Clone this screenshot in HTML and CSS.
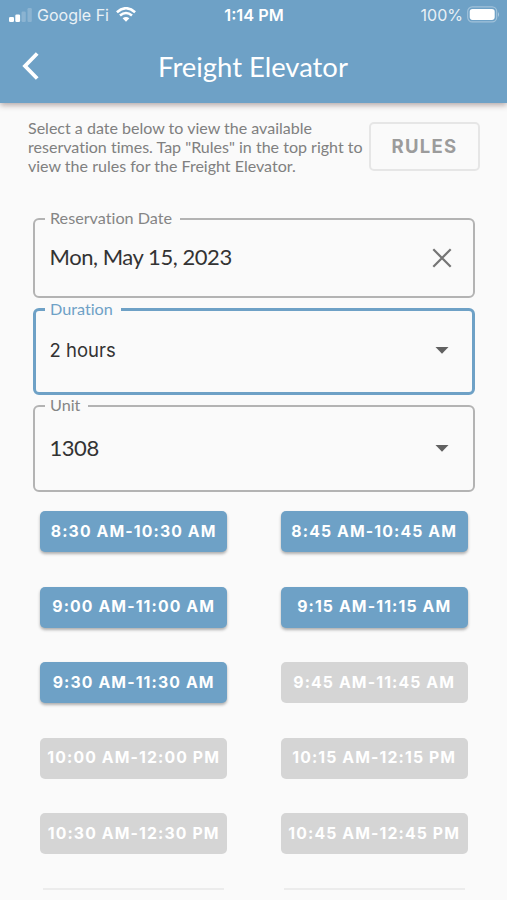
FILE: index.html
```html
<!DOCTYPE html>
<html lang="en">
<head>
<meta charset="utf-8">
<title>Freight Elevator</title>
<link rel="stylesheet" href="styles.css">
</head>
<body>
<header class="top">
  <div class="status">
    <div class="carrier">
      <svg class="signal" width="24" height="16" viewBox="0 0 24 16"><g fill="#fff"><rect x="0" y="10" width="5" height="5" rx="1.3"/><rect x="6.3" y="7.5" width="4.8" height="7.5" rx="1.3"/><rect x="12.5" y="4.5" width="4.3" height="10.5" rx="1.2" opacity=".2"/><rect x="18.5" y="1" width="4.3" height="14" rx="1.2" opacity=".2"/></g></svg>
      <span class="carrier-name">Google Fi</span>
      <svg class="wifi" width="20" height="15" viewBox="0 0 20 15"><g fill="none" stroke="#fff" stroke-width="2.6"><path d="M.9 5.2Q10-2.7 19.1 5.2"/><path d="M4 8.6Q10 3.4 16 8.6"/></g><path d="M6.6 11.3Q10 8.5 13.4 11.3L10 14.8Z" fill="#fff"/></svg>
    </div>
    <span class="clock">1:14 PM</span>
    <div class="power">
      <span>100%</span>
      <svg width="33" height="17" viewBox="0 0 33 17"><rect x=".7" y=".9" width="29" height="15" rx="4.6" fill="none" stroke="#fff" stroke-opacity=".35" stroke-width="1.2"/><rect x="2.7" y="2.9" width="25" height="11" rx="2.8" fill="#fff"/><path d="M31 6q2 2.5 0 5z" fill="#fff" opacity=".45"/></svg>
    </div>
  </div>
  <div class="bar">
    <svg class="back" width="18" height="28" viewBox="0 0 18 28"><path d="M16.2 1.5 4 14 16.2 26.5" fill="none" stroke="#fff" stroke-width="3.8"/></svg>
    <h1>Freight Elevator</h1>
  </div>
</header>
<main>
  <section class="intro">
    <p>Select a date below to view the available<br>reservation times. Tap "Rules" in the top right to<br>view the rules for the Freight Elevator.</p>
    <button class="rules">RULES</button>
  </section>
  <section class="fields">
    <div class="field date">
      <span class="label">Reservation Date</span>
      <span class="value">Mon, May 15, 2023</span>
      <svg width="20" height="20" viewBox="0 0 20 20"><path d="M1.3 1.3 18.7 18.7M18.7 1.3 1.3 18.7" stroke="#757575" stroke-width="2.2"/></svg>
    </div>
    <div class="field duration">
      <span class="label">Duration</span>
      <span class="value">2 hours</span>
      <svg width="14" height="7" viewBox="0 0 14 7"><path d="M.5 0h13L7 6.7z" fill="#616161"/></svg>
    </div>
    <div class="field unit">
      <span class="label">Unit</span>
      <span class="value">1308</span>
      <svg width="14" height="7" viewBox="0 0 14 7"><path d="M.5 0h13L7 6.7z" fill="#616161"/></svg>
    </div>
  </section>
  <section class="slots">
    <button class="slot">8:30 AM-10:30 AM</button>
    <button class="slot">8:45 AM-10:45 AM</button>
    <button class="slot">9:00 AM-11:00 AM</button>
    <button class="slot">9:15 AM-11:15 AM</button>
    <button class="slot">9:30 AM-11:30 AM</button>
    <button class="slot" disabled>9:45 AM-11:45 AM</button>
    <button class="slot" disabled>10:00 AM-12:00 PM</button>
    <button class="slot" disabled>10:15 AM-12:15 PM</button>
    <button class="slot" disabled>10:30 AM-12:30 PM</button>
    <button class="slot" disabled>10:45 AM-12:45 PM</button>
    <div class="next"></div>
    <div class="next"></div>
  </section>
</main>
</body>
</html>
```
FILE: styles.css
```css
* { box-sizing: border-box; }
body {
  margin: 0;
  height: 900px;
  overflow: hidden;
  background: #fafafa;
  font-family: Lato, sans-serif;
  font-variant-ligatures: none;
  color: #808080;
}
svg { display: block; flex: none; }
button { padding: 0; border: 0; font-family: Inter, sans-serif; }
.top {
  height: 103px;
  background: #6ea1c6;
  color: #fff;
  box-shadow: 0 2px 6px rgba(60, 30, 30, .4);
}
.status {
  display: grid;
  grid-template-columns: 1fr auto 1fr;
  align-items: center;
  height: 29px;
  padding: 0 8px 0 9px;
  font: 16px/20px Inter, sans-serif;
}
.carrier, .power { display: flex; align-items: center; }
.carrier-name { margin-left: 4px; opacity: .85; }
.wifi { margin-left: 7px; }
.clock { font-weight: 600; font-size: 16.3px; }
.power { justify-content: flex-end; gap: 4px; }
.power svg { margin-right: -1px; }
.power span { opacity: .85; }
.bar {
  display: grid;
  grid-template-columns: 40px 1fr 40px;
  align-items: center;
  height: 74px;
  padding: 0 22px 0 21px;
}
h1 { margin: 1px 0 0; font-size: 27.4px; line-height: 34px; font-weight: 400; text-align: center; }
.intro {
  display: flex;
  justify-content: space-between;
  padding: 16px 27px 0 28px;
  height: 115px;
}
.intro p { margin: -1px 0 0; font-size: 16.05px; line-height: 19px; white-space: nowrap; }
.rules {
  width: 111px;
  height: 49px;
  margin-top: 3px;
  padding-bottom: 1px;
  border: 2px solid #e6e6e6;
  border-radius: 5px;
  background: none;
  color: #9c9c9c;
  font-size: 18.5px;
  font-weight: 700;
  letter-spacing: 1.3px;
}
.fields { display: flex; flex-direction: column; padding: 0 32px 0 33px; }
.field {
  position: relative;
  display: flex;
  align-items: center;
  justify-content: space-between;
  padding: 0 24px 0 14.5px;
  border: 2px solid #b3b3b3;
  border-radius: 6px;
  color: #333;
}
.date { height: 80px; padding-right: 21px; }
.duration { height: 87px; margin-top: 10px; border: 3px solid #6ea1c6; padding: 0 23px 0 13.5px; }
.unit { height: 87px; margin-top: 10px; }
.value { margin-bottom: 2px; font-size: 22px; line-height: 28px; letter-spacing: -.45px; }
.duration .value { margin-bottom: 4px; font: 18.5px/28px Inter, sans-serif; letter-spacing: 0; }
.duration svg { margin-bottom: 2px; }
.label {
  position: absolute;
  left: 10px;
  top: -12px;
  padding: 0 8px 0 5px;
  background: #fafafa;
  color: #858585;
  font-size: 16.2px;
  line-height: 20px;
}
.duration .label { left: 9px; color: #6ea1c6; }
.slots {
  display: grid;
  grid-template-columns: 187px 187px;
  column-gap: 53.5px;
  row-gap: 34.5px;
  padding: 19px 0 0 40.2px;
}
.slot {
  height: 41px;
  padding-bottom: 1px;
  border-radius: 5px;
  background: #6ea1c6;
  color: #fff;
  font-size: 15.8px;
  font-weight: 700;
  letter-spacing: 1.12px;
  white-space: nowrap;
  box-shadow: 0 2px 3px rgba(0, 0, 0, .3);
}
.slot:disabled { background: #d5d5d5; box-shadow: none; }
.next { height: 2px; margin: -1px 3px 0; background: #ececec; }
```
